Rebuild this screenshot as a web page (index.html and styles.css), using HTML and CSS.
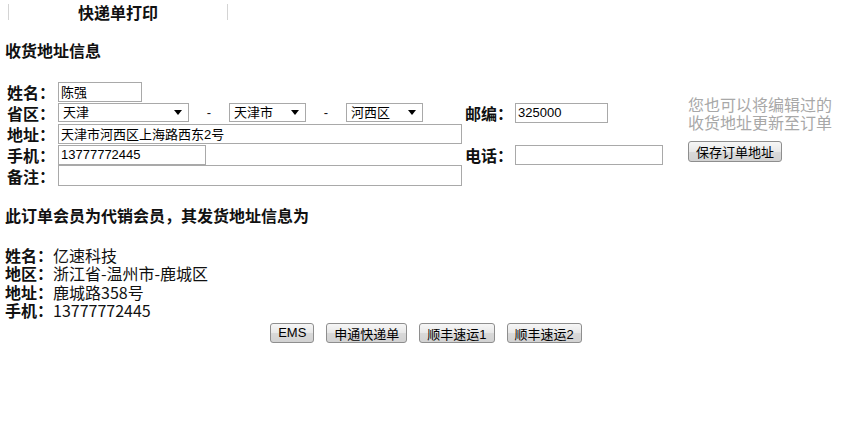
FILE: index.html
```html
<!DOCTYPE html>
<html lang="zh-CN">
<head>
    <meta charset="UTF-8">
    <title>快递单打印</title>
    <link rel="stylesheet" href="styles.css">
</head>
<body>
<div class="tab">快递单打印</div>

<div class="section">收货地址信息</div>
<div class="form">
    <span class="lbl">姓名：</span>
    <div><input class="txt name" type="text" value="陈强"></div>

    <span class="lbl row2">省区：</span>
    <div class="selects row2">
        <span class="sel"><select class="pick prov"><option>天津</option></select></span>
        <span class="sep">-</span>
        <span class="sel"><select class="pick city"><option>天津市</option></select></span>
        <span class="sep">-</span>
        <span class="sel"><select class="pick city"><option>河西区</option></select></span>
    </div>
    <span class="lbl row2">邮编：</span>
    <div class="row2"><input class="txt zip" type="text" value="325000"></div>

    <span class="lbl row3">地址：</span>
    <div class="row3"><input class="txt wide" type="text" value="天津市河西区上海路西东2号"></div>

    <span class="lbl row4">手机：</span>
    <div class="row4"><input class="txt mobile" type="text" value="13777772445"></div>
    <span class="lbl row4">电话：</span>
    <div class="row4"><input class="txt tel" type="text" value=""></div>

    <span class="lbl row5">备注：</span>
    <div class="row5"><input class="txt wide note" type="text" value=""></div>

    <div class="aside">
        <div class="hint">您也可以将编辑过的<br>收货地址更新至订单</div>
        <button class="btn save">保存订单地址</button>
    </div>
</div>

<div class="section second">此订单会员为代销会员，其发货地址信息为</div>
<div class="info">
    <div><b>姓名：</b>亿速科技</div>
    <div><b>地区：</b>浙江省-温州市-鹿城区</div>
    <div><b>地址：</b>鹿城路358号</div>
    <div><b>手机：</b>13777772445</div>
</div>

<div class="actions">
    <button class="btn">EMS</button>
    <button class="btn">申通快递单</button>
    <button class="btn">顺丰速运1</button>
    <button class="btn">顺丰速运2</button>
</div>
</body>
</html>
```

FILE: styles.css
```css
body {
    margin: 0;
    padding: 0 5px;
    font-family: "Noto Sans CJK SC", sans-serif;
    font-size: 16px;
    line-height: 18px;
    color: #111;
    background-color: #ffffff;
}
.tab {
    width: 218px;
    height: 16px;
    margin: 4px 0 0 3px;
    border-left: 1px solid #d4d4d4;
    border-right: 1px solid #d4d4d4;
    line-height: 16px;
    font-weight: bold;
    text-align: center;
}
.section {
    margin-top: 21px;
    font-weight: bold;
}
.section.second {
    margin-top: 20px;
}
.form {
    margin-top: 22px;
    display: grid;
    grid-template-columns: 53px 405px 52px 173px auto;
    grid-template-rows: 21px 21px 21px 21px 21px;
    align-items: center;
}
.row2 { grid-row: 2; }
.row3 { grid-row: 3; }
.row4 { grid-row: 4; }
.row5 { grid-row: 5; }
.lbl {
    padding-left: 2px;
    font-weight: bold;
}
.txt {
    box-sizing: border-box;
    display: block;
    height: 20px;
    margin: 0;
    padding: 0 2px;
    border: 1px solid #a9a9a9;
    font: 13px "Liberation Sans", "Noto Sans CJK SC", sans-serif;
    color: #000;
    background: #fff;
}
.name { width: 84px; }
.wide { width: 404px; }
.note { height: 21px; }
.mobile { width: 148px; }
.zip { width: 93px; }
.tel { width: 148px; }
.selects {
    display: flex;
    align-items: center;
}
.sel {
    position: relative;
    display: block;
}
.sel:after {
    content: '';
    position: absolute;
    right: 7px;
    top: 7px;
    border-left: 4px solid transparent;
    border-right: 4px solid transparent;
    border-top: 5px solid #000;
    pointer-events: none;
}
.pick {
    display: block;
    box-sizing: border-box;
    height: 19px;
    margin: 0;
    padding: 0 0 0 4px;
    border: 1px solid #a9a9a9;
    border-radius: 0;
    -webkit-appearance: none;
    appearance: none;
    background: #fff;
    font: 13px "Liberation Sans", "Noto Sans CJK SC", sans-serif;
    color: #000;
}
.prov { width: 131px; }
.city { width: 77px; }
.sep {
    width: 40px;
    text-align: center;
    font: 13px "Liberation Sans", sans-serif;
}
.aside {
    grid-column: 5;
    grid-row: 1 / 6;
    align-self: start;
    padding-top: 14px;
}
.hint {
    color: #a8a8a8;
}
.btn {
    box-sizing: border-box;
    height: 20px;
    margin: 0;
    padding: 0 7px;
    border: 1px solid #8e8e8e;
    border-radius: 3px;
    background: linear-gradient(#f6f6f6, #e8e8e8 50%, #d9d9d9 51%, #d2d2d2);
    font: 13px "Liberation Sans", "Noto Sans CJK SC", sans-serif;
    color: #000;
}
.save {
    display: block;
    height: 21px;
    margin-top: 10px;
}
.info {
    margin-top: 22px;
    line-height: 18.4px;
}
.actions {
    margin-top: 3px;
    padding-left: 6px;
    display: flex;
    justify-content: center;
    gap: 12px;
}
```
